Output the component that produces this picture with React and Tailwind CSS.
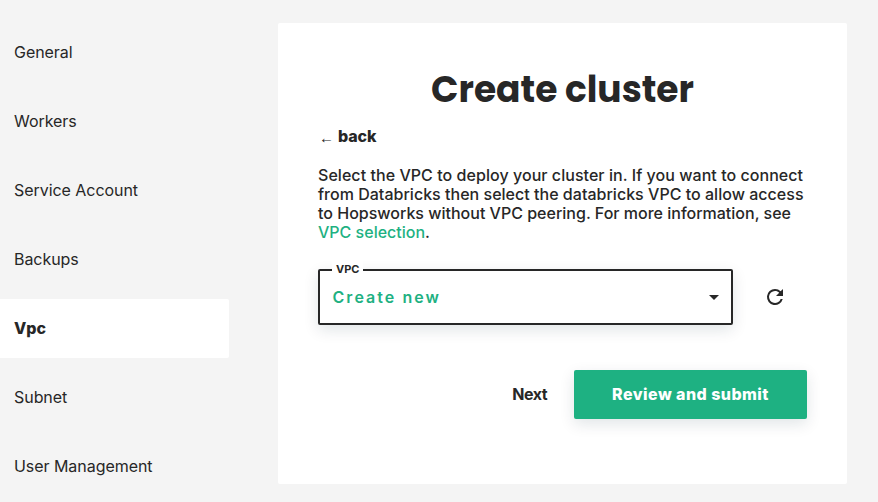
const items = ["General", "Workers", "Service Account", "Backups", "Vpc", "Subnet", "User Management"];

export default function App() {
  return (
    <div className="flex h-[502px] w-[878px] overflow-hidden bg-[#f4f4f4] font-['Inter',sans-serif] text-[#272727]">
      <nav className="flex w-[229px] shrink-0 flex-col gap-2.5 pt-[23px]">
        {items.map((item) => (
          <a
            key={item}
            className={
              item === "Vpc"
                ? "flex h-[59px] shrink-0 items-center rounded-r-[2px] bg-white pb-0.5 pl-3.5 text-base font-extrabold"
                : "flex h-[59px] shrink-0 items-center pb-0.5 pl-3.5 text-base tracking-[-0.05px]"
            }
          >
            {item}
          </a>
        ))}
      </nav>
      <main className="mt-[23px] ml-[49px] flex h-[461px] w-[569px] flex-col rounded-[2px] bg-white px-10 pt-[42px]">
        <h1 className="pt-px text-center font-['Poppins','Inter',sans-serif] text-[36px] leading-[48px] font-bold">
          Create cluster
        </h1>
        <a className="mt-[10px] flex h-6 items-center gap-1 pl-px text-base leading-[24px] font-bold">
          <span className="pt-[3px] font-['Liberation_Serif',serif] text-[15px] leading-5 font-normal">←</span>
          <span className="font-extrabold tracking-[-0.1px]">back</span>
        </a>
        <p className="mt-[18px] text-base leading-[19px] font-medium whitespace-nowrap">
          <span className="tracking-[0.05px]">Select the VPC to deploy your cluster in. If you want to connect</span>
          <br />
          <span className="tracking-[0.02px]">from Databricks then select the databricks VPC to allow access</span>
          <br />
          to Hopsworks without VPC peering. For more information, see
          <br />
          <span className="text-[#1eb182]">VPC selection</span>.
        </p>
        <div className="mt-[27px] flex items-center">
          <div className="relative flex h-14 w-[415px] items-center justify-between rounded-[2px] border-2 border-[#272727] bg-white pr-3 pl-[12.5px] shadow-[0_5px_15px_rgba(0,40,60,0.12)]">
            <span className="absolute -top-[10px] left-3 bg-white px-1 text-[11px] leading-4 font-bold">VPC</span>
            <span className="text-base font-semibold tracking-[2.05px] text-[#1eb182]">Create new</span>
            <svg width="10" height="5" viewBox="0 0 10 5" fill="currentColor">
              <path d="M0 0h10L5 5z" />
            </svg>
          </div>
          <svg className="ml-[30px]" width="24" height="24" viewBox="0 0 24 24" fill="currentColor">
            <path d="M17.65 6.35A7.96 7.96 0 0 0 12 4a8 8 0 1 0 7.73 10h-2.08A6 6 0 1 1 12 6c1.66 0 3.14.69 4.22 1.78L13 11h7V4z" />
          </svg>
        </div>
        <div className="mt-[45px] flex items-center justify-end gap-[27px]">
          <button className="pb-0.5 text-base font-bold tracking-[-0.5px]">Next</button>
          <button className="h-[49px] w-[233px] rounded-[2px] bg-[#1eb182] pb-0.5 text-base font-extrabold tracking-[0.45px] text-white shadow-[0_5px_15px_rgba(0,40,60,0.12)]">
            Review and submit
          </button>
        </div>
      </main>
    </div>
  );
}
